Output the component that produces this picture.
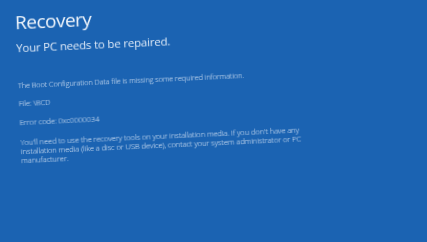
export default function App() {
  return (
    <div className="w-[427px] h-[242px] overflow-hidden bg-[#1b63b2] text-[#eef4fb] font-['Open_Sans','Noto_Sans',sans-serif]">
      <div className="pl-[14px] pt-[11px] -rotate-[2.6deg] origin-top-left blur-[0.3px]">
        <h1 className="text-[19px] leading-[24px] tracking-[-0.5px]">Recovery</h1>
        <p className="text-[11.5px] leading-[16px] mt-[6px] tracking-[-0.2px] text-[#dde9f7]">Your PC needs to be repaired.</p>
        <div className="mt-[25px] text-[7.6px] leading-[9px] tracking-[-0.1px] text-[#dbe7f6] font-light">
          <p className="text-[7.4px] tracking-[-0.1px]">The Boot Configuration Data file is missing some required information.</p>
          <p className="mt-[9px]">File: \BCD</p>
          <p className="mt-[10px]">Error code: 0xc0000034</p>
          <p className="mt-[11px]">
            You'll need to use the recovery tools on your installation media. If you don't have any
            <br />
            installation media (like a disc or USB device), contact your system administrator or PC
            <br />
            manufacturer.
          </p>
        </div>
      </div>
    </div>
  );
}
